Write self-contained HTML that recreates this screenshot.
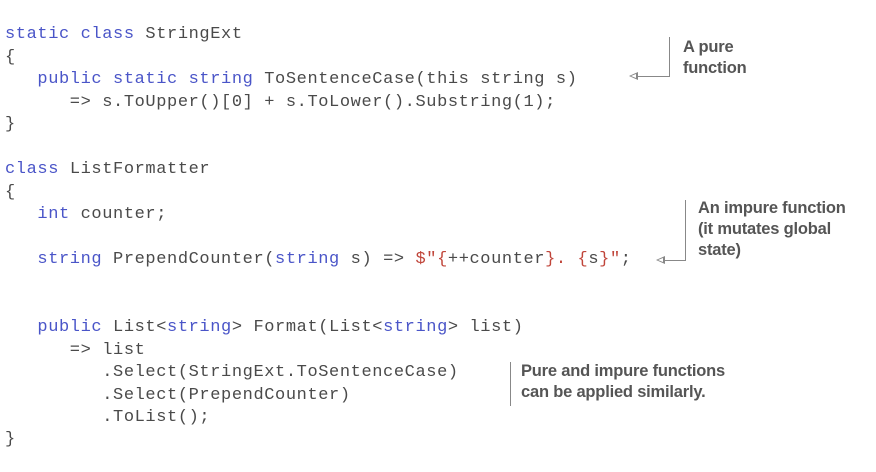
<!DOCTYPE html>
<html><head><meta charset="utf-8"><style>
body{margin:0;width:876px;height:472px;background:#fff;position:relative;overflow:hidden}
.c{position:absolute;left:5px;font-family:"Liberation Mono",monospace;font-size:17px;letter-spacing:0.6px;color:#4a4a4a;white-space:pre;line-height:20px}
.k{color:#4a55c8}.r{color:#c0453a}
.a{position:absolute;font-family:"Liberation Sans",sans-serif;font-weight:bold;font-size:16.5px;color:#555;line-height:21px;letter-spacing:-0.2px}
.l{position:absolute;background:#888}
.ar{position:absolute;width:0;height:0;border-top:4px solid transparent;border-bottom:4px solid transparent;border-right:9px solid #888}
.ar:after{content:"";position:absolute;left:2px;top:-2px;border-top:2px solid transparent;border-bottom:2px solid transparent;border-right:5px solid #fff}
</style></head><body>
<div class="c" style="top:25px"><span class="k">static class</span> StringExt</div>
<div class="c" style="top:48px">{</div>
<div class="c" style="top:70px">   <span class="k">public static string</span> ToSentenceCase(this string s)</div>
<div class="c" style="top:93px">      =&gt; s.ToUpper()[0] + s.ToLower().Substring(1);</div>
<div class="c" style="top:115px">}</div>
<div class="c" style="top:160px"><span class="k">class</span> ListFormatter</div>
<div class="c" style="top:183px">{</div>
<div class="c" style="top:205px">   <span class="k">int</span> counter;</div>
<div class="c" style="top:250px">   <span class="k">string</span> PrependCounter(<span class="k">string</span> s) =&gt; <span class="r">$"{</span>++counter<span class="r">}. {</span>s<span class="r">}"</span>;</div>
<div class="c" style="top:318px">   <span class="k">public</span> List&lt;<span class="k">string</span>&gt; Format(List&lt;<span class="k">string</span>&gt; list)</div>
<div class="c" style="top:341px">      =&gt; list</div>
<div class="c" style="top:363px">         .Select(StringExt.ToSentenceCase)</div>
<div class="c" style="top:386px">         .Select(PrependCounter)</div>
<div class="c" style="top:408px">         .ToList();</div>
<div class="c" style="top:430px">}</div>

<div class="a" style="left:683px;top:37px">A pure<br>function</div>
<div class="l" style="left:669px;top:37px;width:1px;height:40px"></div>
<div class="l" style="left:636px;top:76px;width:34px;height:1px"></div>
<div class="ar" style="left:629px;top:72px"></div>

<div class="a" style="left:698px;top:198px">An impure function<br>(it mutates global<br>state)</div>
<div class="l" style="left:685px;top:200px;width:1px;height:61px"></div>
<div class="l" style="left:663px;top:260px;width:23px;height:1px"></div>
<div class="ar" style="left:656px;top:256px"></div>

<div class="a" style="left:521px;top:361px">Pure and impure functions<br>can be applied similarly.</div>
<div class="l" style="left:510px;top:362px;width:1px;height:44px"></div>
</body></html>
